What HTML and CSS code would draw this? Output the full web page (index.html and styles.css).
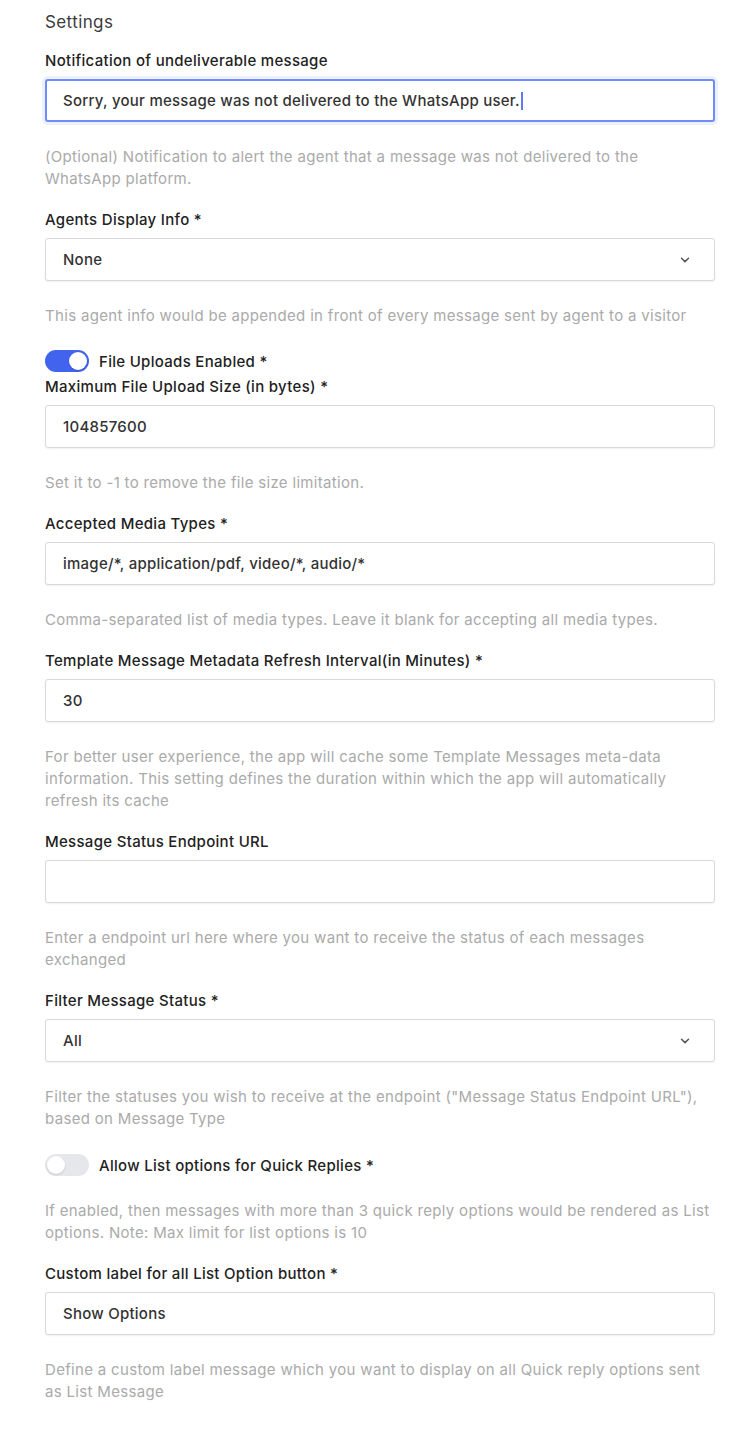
FILE: index.html
```html
<!DOCTYPE html>
<html>
<head>
<meta charset="utf-8">
<link rel="stylesheet" href="styles.css">
</head>
<body>
<div class="page">
  <h2 class="title">Settings</h2>

  <div class="field">
    <label class="label">Notification of undeliverable message</label>
    <div class="input focused">Sorry, your message was not delivered to the WhatsApp user.<span class="caret"></span></div>
    <p class="help">(Optional) Notification to alert the agent that a message was not delivered to the WhatsApp platform.</p>
  </div>

  <div class="field">
    <label class="label">Agents Display Info *</label>
    <div class="input select">None<svg class="chev" width="10" height="6" viewBox="0 0 10 6"><path d="M1.5 1.2 L5 4.6 L8.5 1.2" fill="none" stroke="#555" stroke-width="1.5" stroke-linecap="round" stroke-linejoin="round"/></svg></div>
    <p class="help">This agent info would be appended in front of every message sent by agent to a visitor</p>
  </div>

  <div class="toggle-row tight">
    <span class="toggle on"><span class="knob"></span></span>
    <span class="toggle-label">File Uploads Enabled *</span>
  </div>

  <div class="field">
    <label class="label">Maximum File Upload Size (in bytes) *</label>
    <div class="input">104857600</div>
    <p class="help">Set it to -1 to remove the file size limitation.</p>
  </div>

  <div class="field">
    <label class="label">Accepted Media Types *</label>
    <div class="input">image/*, application/pdf, video/*, audio/*</div>
    <p class="help">Comma-separated list of media types. Leave it blank for accepting all media types.</p>
  </div>

  <div class="field">
    <label class="label">Template Message Metadata Refresh Interval(in Minutes) *</label>
    <div class="input">30</div>
    <p class="help">For better user experience, the app will cache some Template Messages meta-data information. This setting defines the duration within which the app will automatically refresh its cache</p>
  </div>

  <div class="field">
    <label class="label">Message Status Endpoint URL</label>
    <div class="input"></div>
    <p class="help">Enter a endpoint url here where you want to receive the status of each messages exchanged</p>
  </div>

  <div class="field">
    <label class="label">Filter Message Status *</label>
    <div class="input select">All<svg class="chev" width="10" height="6" viewBox="0 0 10 6"><path d="M1.5 1.2 L5 4.6 L8.5 1.2" fill="none" stroke="#555" stroke-width="1.5" stroke-linecap="round" stroke-linejoin="round"/></svg></div>
    <p class="help">Filter the statuses you wish to receive at the endpoint ("Message Status Endpoint URL"), based on Message Type</p>
  </div>

  <div class="field">
    <div class="toggle-row">
      <span class="toggle"><span class="knob"></span></span>
      <span class="toggle-label">Allow List options for Quick Replies *</span>
    </div>
    <p class="help">If enabled, then messages with more than 3 quick reply options would be rendered as List options. Note: Max limit for list options is 10</p>
  </div>

  <div class="field">
    <label class="label">Custom label for all List Option button *</label>
    <div class="input">Show Options</div>
    <p class="help">Define a custom label message which you want to display on all Quick reply options sent as List Message</p>
  </div>
</div>
</body>
</html>
```

FILE: styles.css
```css
* { box-sizing: border-box; }
html, body { margin: 0; padding: 0; background: #fff; }
body {
  font-family: Inter, "Noto Sans", sans-serif;
  color: #222;
  letter-spacing: 0.25px;
  -webkit-font-smoothing: antialiased;
}
.page {
  width: 754px;
  padding: 11px 39px 40px 45px;
}
.title {
  margin: 0 0 18px;
  font-size: 17px;
  line-height: 22px;
  font-weight: 400;
  letter-spacing: 0.4px;
  color: #3c3c3c;
}
.field {
  display: flex;
  flex-direction: column;
  margin-bottom: 20px;
}
.label {
  display: block;
  font-size: 15px;
  line-height: 20px;
  font-weight: 500;
  letter-spacing: 0.3px;
  color: #222;
  margin-bottom: 8px;
}
.input {
  height: 43px;
  border: 1px solid #d9d9d9;
  border-radius: 3px;
  box-shadow: 0 1px 2px rgba(0,0,0,0.06);
  padding: 0 17px;
  display: flex;
  align-items: center;
  font-size: 15px;
  font-weight: 500;
  letter-spacing: 0.25px;
  color: #333;
  background: #fff;
}
.input.focused {
  border: 2px solid #6f8cf8;
  padding: 0 16px;
  box-shadow: 0 0 0 3px rgba(111,140,248,0.12);
}
.caret {
  display: inline-block;
  width: 2px;
  height: 18px;
  background: #5b7bf5;
  margin-left: 1px;
}
.select {
  justify-content: space-between;
  padding-right: 24px;
}
.chev { display: block; }
.help {
  margin: 24px 0 0;
  font-size: 15px;
  line-height: 22px;
  letter-spacing: 0.32px;
  color: #aaaaaa;
  font-weight: 400;
}
.toggle-row {
  display: flex;
  align-items: center;
  gap: 10px;
  height: 22px;
  margin-top: 4px;
}
.toggle-row.tight {
  margin-top: 23px;
  margin-bottom: 5px;
}
.toggle {
  width: 44px;
  height: 22px;
  border-radius: 11px;
  background: #e6e7eb;
  display: flex;
  align-items: center;
  padding: 2px;
}
.toggle .knob {
  width: 18px;
  height: 18px;
  border-radius: 50%;
  background: #fff;
  box-shadow: 0 1px 2px rgba(0,0,0,0.15);
}
.toggle.on {
  background: #4163ee;
  justify-content: flex-end;
}
.toggle-label {
  font-size: 15px;
  font-weight: 500;
  letter-spacing: 0.3px;
  color: #222;
}
```
